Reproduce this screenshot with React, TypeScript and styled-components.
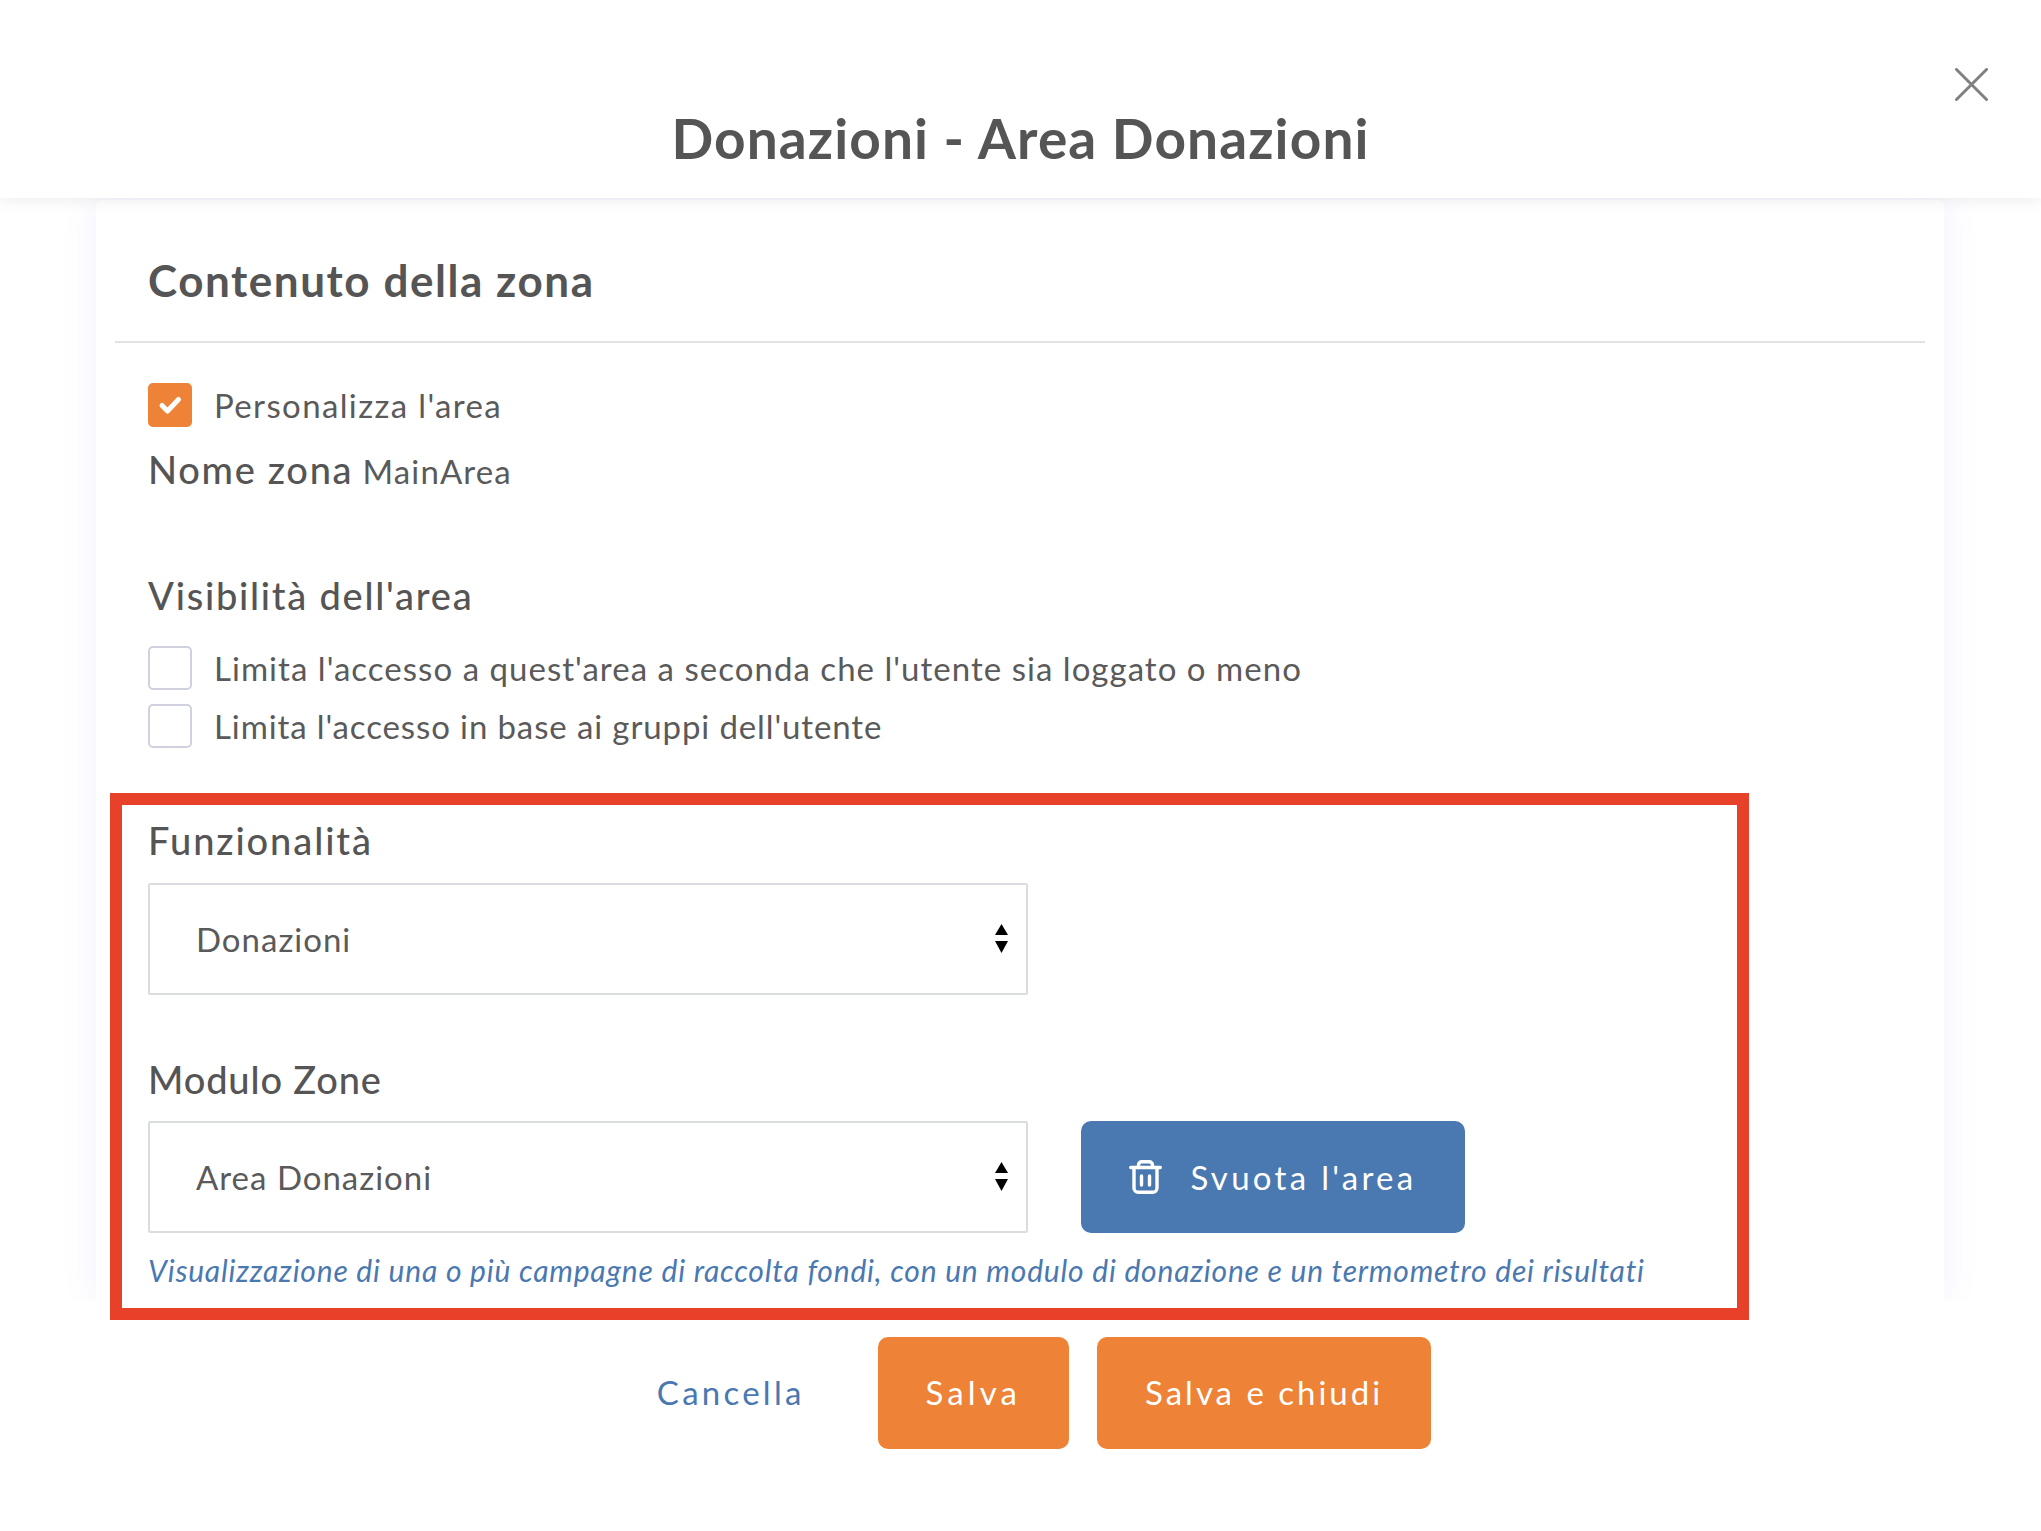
import React from "react"
import styled, { createGlobalStyle } from "styled-components"

const GlobalStyle = createGlobalStyle`
  html, body {
    margin: 0;
    padding: 0;
    background: #ffffff;
  }
  * {
    box-sizing: border-box;
  }
`

const Page = styled.div`
  position: relative;
  width: 2041px;
  height: 1531px;
  display: flex;
  flex-direction: column;
  background: #ffffff;
  color: #555555;
  font-family: "Lato", "Open Sans", sans-serif;
`

const Header = styled.header`
  position: relative;
  z-index: 2;
  flex: none;
  height: 198px;
  display: grid;
  grid-template-columns: 1fr auto 1fr;
  background: #ffffff;
  box-shadow: 0 3px 14px rgba(0, 0, 0, 0.07);
`

const Title = styled.h1`
  grid-column: 2;
  margin: 0;
  padding-top: 105px;
  font-size: 55px;
  line-height: 66px;
  font-weight: 700;
  letter-spacing: 1.1px;
  color: #555555;
`

const CloseButton = styled.button`
  grid-column: 3;
  justify-self: end;
  align-self: start;
  margin: 68px 53px 0 0;
  padding: 0;
  width: 33px;
  height: 33px;
  border: none;
  background: none;
  color: #808080;
  svg {
    display: block;
  }
`

const CardFrame = styled.div`
  flex: none;
  height: 1102px;
  padding: 2px 97px 0 96px;
  overflow: hidden;
`

const Card = styled.main`
  height: 1100px;
  padding: 0 19px;
  border-radius: 6px 6px 0 0;
  background: #ffffff;
  box-shadow: 0 0 34px rgba(110, 120, 255, 0.1);
`

const CardTitle = styled.h2`
  margin: 0;
  height: 143px;
  padding: 52px 0 0 33px;
  font-size: 44px;
  line-height: 56px;
  font-weight: 700;
  letter-spacing: 1.55px;
  color: #555555;
  border-bottom: 2px solid #e2e3e5;
`

const CardBody = styled.div`
  padding: 40px 0 0 33px;
`

const CheckRow = styled.label<{ $top?: number; $tracking?: number }>`
  display: flex;
  align-items: center;
  gap: 22px;
  margin-top: ${props => props.$top ?? 0}px;
  font-size: 33px;
  line-height: 44px;
  letter-spacing: ${props => props.$tracking ?? 1}px;
  color: #5a5a5a;
`

const CheckBox = styled.span<{ $checked?: boolean }>`
  flex: none;
  width: 44px;
  height: 44px;
  display: block;
  border-radius: 5px;
  border: ${props => props.$checked ? "none" : "2px solid #cfd2de"};
  background: ${props => props.$checked ? "#ee8236" : "#ffffff"};
  svg {
    display: block;
  }
`

const ZoneLine = styled.div`
  margin-top: 18px;
  font-size: 38px;
  line-height: 48px;
  font-weight: 500;
  letter-spacing: 1.7px;
  span {
    margin-left: -2px;
    font-size: 33px;
    font-weight: 400;
    letter-spacing: 1.1px;
    color: #5a5a5a;
  }
`

const SectionLabel = styled.h3<{ $top: number; $tracking: number }>`
  margin: ${props => props.$top}px 0 0;
  font-size: 38px;
  line-height: 48px;
  font-weight: 500;
  letter-spacing: ${props => props.$tracking}px;
  color: #555555;
`

const SelectWrap = styled.div<{ $top?: number }>`
  position: relative;
  flex: none;
  width: 880px;
  height: 112px;
  margin-top: ${props => props.$top ?? 0}px;
  svg {
    position: absolute;
    top: 41px;
    right: 20px;
    pointer-events: none;
  }
`

const Select = styled.select`
  appearance: none;
  display: block;
  width: 100%;
  height: 100%;
  padding: 0 60px 0 46px;
  border: 2px solid #d9dde0;
  border-radius: 2px;
  background: #ffffff;
  font-family: inherit;
  font-size: 33px;
  letter-spacing: 1px;
  color: #5a5a5a;
`

const ActionRow = styled.div`
  display: flex;
  gap: 53px;
  margin-top: 18px;
`

const BaseButton = styled.button<{ $tracking: number }>`
  display: flex;
  align-items: center;
  justify-content: center;
  height: 112px;
  border: none;
  border-radius: 10px;
  font-family: inherit;
  font-size: 33px;
  letter-spacing: ${props => props.$tracking}px;
  color: #ffffff;
`

const ClearButton = styled(BaseButton)`
  width: 384px;
  gap: 28px;
  background: #4a78b0;
`

const HelpText = styled.p`
  margin: 17px 0 0;
  font-size: 30px;
  line-height: 40px;
  font-style: italic;
  letter-spacing: 0.8px;
  color: #4a78b0;
`

const Footer = styled.footer`
  display: flex;
  justify-content: center;
  gap: 28px;
  margin-top: 37px;
`

const CancelButton = styled(BaseButton)`
  padding: 0 45px 2px 47px;
  background: none;
  color: #4a78b0;
`

const SaveButton = styled(BaseButton)`
  padding: 0 48px 2px;
  background: #ee8236;
`

const Highlight = styled.div`
  position: absolute;
  z-index: 3;
  top: 793px;
  left: 110px;
  width: 1639px;
  height: 527px;
  border: 12px solid #e8412a;
  pointer-events: none;
`

const SortArrows = () => (
  <svg width="13" height="29" viewBox="0 0 13 29" aria-hidden="true">
    <path d="M6.5 0 13 11H0z" fill="#000000" />
    <path d="M0 17h13L6.5 29z" fill="#000000" />
  </svg>
)

const TrashIcon = () => (
  <svg width="33" height="34" viewBox="0 0 33 34" fill="none" stroke="#ffffff" strokeWidth="3.4" strokeLinecap="round" aria-hidden="true">
    <path d="M1.7 7.5h29.6" />
    <path d="M9.5 7.5V5a3.3 3.3 0 0 1 3.3-3.3h7.4A3.3 3.3 0 0 1 23.5 5v2.5" />
    <path d="M5 7.5V28a4.3 4.3 0 0 0 4.3 4.3h14.4A4.3 4.3 0 0 0 28 28V7.5" />
    <path d="M12.5 16v9M20.5 16v9" />
  </svg>
)

const options = {
  feature: ["Donazioni"],
  module: ["Area Donazioni"],
}

const App = () => {
  return (
    <Page>
      <GlobalStyle />
      <Header>
        <Title>Donazioni - Area Donazioni</Title>
        <CloseButton aria-label="Chiudi">
          <svg width="33" height="33" viewBox="0 0 33 33" stroke="currentColor" strokeWidth="3" strokeLinecap="round">
            <path d="M1.5 1.5l30 30M31.5 1.5l-30 30" />
          </svg>
        </CloseButton>
      </Header>

      <CardFrame>
        <Card>
          <CardTitle>Contenuto della zona</CardTitle>
          <CardBody>
            <CheckRow $tracking={1.37}>
              <CheckBox $checked>
                <svg width="44" height="44" viewBox="0 0 44 44" fill="none" stroke="#ffffff" strokeWidth="5" strokeLinecap="round" strokeLinejoin="round">
                  <path d="M14 22.5l5.5 5.5L30.5 16.5" />
                </svg>
              </CheckBox>
              Personalizza l'area
            </CheckRow>
            <ZoneLine>
              Nome zona <span>MainArea</span>
            </ZoneLine>

            <SectionLabel $top={76} $tracking={1.75}>Visibilità dell'area</SectionLabel>
            <CheckRow $top={27} $tracking={1.03}>
              <CheckBox />
              Limita l'accesso a quest'area a seconda che l'utente sia loggato o meno
            </CheckRow>
            <CheckRow $top={14} $tracking={0.88}>
              <CheckBox />
              Limita l'accesso in base ai gruppi dell'utente
            </CheckRow>

            <SectionLabel $top={68} $tracking={1.9}>Funzionalità</SectionLabel>
            <SelectWrap $top={19}>
              <Select defaultValue="Donazioni">
                {options.feature.map(item => <option key={item}>{item}</option>)}
              </Select>
              <SortArrows />
            </SelectWrap>

            <SectionLabel $top={60} $tracking={0.85}>Modulo Zone</SectionLabel>
            <ActionRow>
              <SelectWrap>
                <Select defaultValue="Area Donazioni">
                  {options.module.map(item => <option key={item}>{item}</option>)}
                </Select>
                <SortArrows />
              </SelectWrap>
              <ClearButton $tracking={3.3}>
                <TrashIcon />
                Svuota l'area
              </ClearButton>
            </ActionRow>
            <HelpText>
              Visualizzazione di una o più campagne di raccolta fondi, con un modulo di donazione e un termometro dei risultati
            </HelpText>
          </CardBody>
        </Card>
      </CardFrame>

      <Footer>
        <CancelButton $tracking={3.25}>Cancella</CancelButton>
        <SaveButton $tracking={4.1}>Salva</SaveButton>
        <SaveButton $tracking={3}>Salva e chiudi</SaveButton>
      </Footer>

      <Highlight />
    </Page>
  )
}

export default App
